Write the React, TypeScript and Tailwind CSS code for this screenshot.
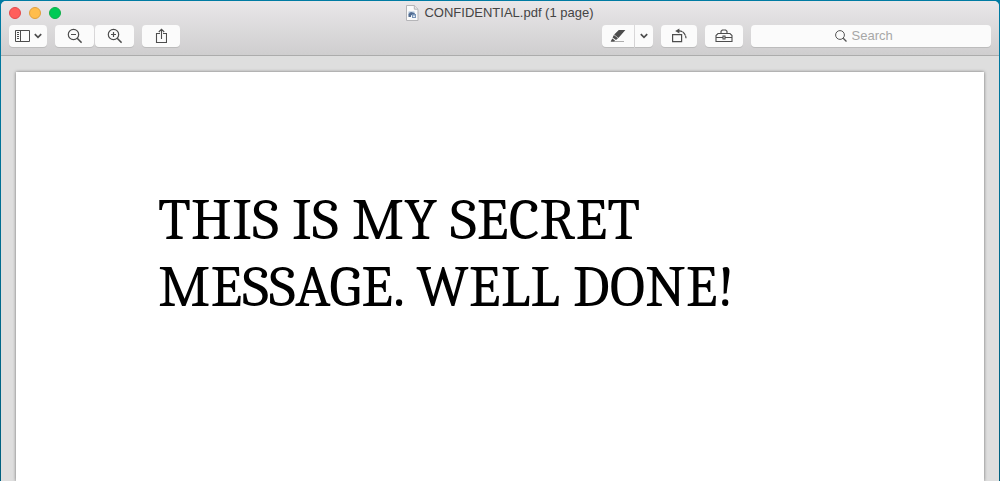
import type { ReactNode } from "react";

function ToolButton({ label, className, children }: { label: string; className: string; children: ReactNode }) {
  return (
    <button
      type="button"
      aria-label={label}
      className={`flex h-[22px] items-center justify-center bg-[#fbfbfb] text-[#4d4d4d] shadow-[0_1px_0_#bcbcbc] ${className}`}
    >
      {children}
    </button>
  );
}

function Chevron() {
  return (
    <svg width="8" height="6" viewBox="0 0 8 6" fill="none" stroke="currentColor" strokeWidth="1.7" aria-hidden="true">
      <path d="M.8 1.2 4 4.4 7.2 1.2" />
    </svg>
  );
}

function Magnifier({ sign }: { sign: "plus" | "minus" }) {
  return (
    <svg width="15" height="16" viewBox="0 0 15 16" fill="none" stroke="currentColor" strokeWidth="1.2" aria-hidden="true">
      <circle cx="6.5" cy="6.5" r="5.2" />
      <path d="m10.2 10.3 4.4 4.4" strokeWidth="1.5" />
      <path d="M4 6.5h5" />
      {sign === "plus" && <path d="M6.5 4v5" />}
    </svg>
  );
}

function TitleBar() {
  return (
    <div className="grid h-6 grid-cols-[1fr_auto_1fr] items-center">
      <div className="flex gap-2 pl-2">
        <button type="button" aria-label="Close" className="size-3 rounded-full border border-[#e2494b] bg-[#ff5f5c]" />
        <button type="button" aria-label="Minimize" className="size-3 rounded-full border border-[#e0a03c] bg-[#ffbd4c]" />
        <button type="button" aria-label="Zoom window" className="size-3 rounded-full border border-[#0fae49] bg-[#00ca56]" />
      </div>
      <h1 className="flex items-center gap-[5px] font-['Helvetica_Neue','Liberation_Sans',sans-serif] text-[13px] text-[#444]">
        <svg width="13" height="16" viewBox="0 0 13 16" aria-hidden="true">
          <path d="M.5.5h7.8L12 4.2v11.3H.5z" fill="#fafafa" stroke="#b5b5b8" />
          <path d="M8.3.5v3.7H12" fill="#e6e6e6" stroke="#b5b5b8" />
          <path d="M2.5 6.5h6v4h-6z" fill="#a8bdd6" />
          <path d="M2.5 9 5 7l4 1.5V10H5v2H2.5z" fill="#536c91" />
          <path d="M6 9h4v4H6z" fill="#7894b8" />
          <path d="M7 10.5h2v1.5H7z" fill="#e0e8f0" />
        </svg>
        <span>CONFIDENTIAL.pdf (1 page)</span>
      </h1>
      <div />
    </div>
  );
}

function Toolbar() {
  return (
    <div className="flex gap-2 px-2 pb-2" role="toolbar" aria-label="Document tools">
      <ToolButton label="View" className="w-[38px] gap-1 rounded">
        <svg width="15" height="12" viewBox="0 0 15 12" fill="none" stroke="currentColor" aria-hidden="true">
          <path d="M.5.5h14v11H.5zM5.5.5v11M2 2.5h2M2 4.5h2M2 6.5h2M2 8.5h2" />
        </svg>
        <Chevron />
      </ToolButton>
      <div className="flex gap-px">
        <ToolButton label="Zoom out" className="w-[39px] rounded">
          <Magnifier sign="minus" />
        </ToolButton>
        <ToolButton label="Zoom in" className="w-[39px] rounded">
          <Magnifier sign="plus" />
        </ToolButton>
      </div>
      <ToolButton label="Share" className="w-[38px] rounded">
        <svg width="12" height="16" viewBox="0 0 12 16" fill="none" stroke="currentColor" strokeWidth="1.1" aria-hidden="true">
          <path d="M5 5.5H1.5v9h10v-9H8M6.5 11V1.5M3.8 4 6.5 1.2 9.2 4" />
        </svg>
      </ToolButton>
      <div className="ml-auto flex gap-px">
        <ToolButton label="Highlight" className="w-8 rounded-l">
          <svg width="16" height="14" viewBox="0 0 16 14" fill="currentColor" aria-hidden="true">
            <path d="M8.8 1H15.4L8.4 9 4.2 5.6zM3.9 6 8 9.3 6 11 2.6 8.6zM2.3 9.4 5 11.5 4.2 12.5H.6z" />
            <path d="M1 12h13v1H1z" opacity=".45" />
          </svg>
        </ToolButton>
        <ToolButton label="Highlight colors" className="w-[18px] rounded-r">
          <Chevron />
        </ToolButton>
      </div>
      <ToolButton label="Rotate left" className="w-9 rounded">
        <svg width="15" height="16" viewBox="0 0 15 16" fill="none" stroke="currentColor" strokeWidth="1.2" aria-hidden="true">
          <path d="M.6 6.6h9v7h-9z" />
          <path d="M6 2.9c4.6-.5 7.6 2.6 8 7.4" strokeDasharray="4.6 .4" />
          <path d="M3.2 2.9 7.4.4v5z" fill="currentColor" stroke="none" />
        </svg>
      </ToolButton>
      <ToolButton label="Markup toolbox" className="w-[38px] rounded">
        <svg width="18" height="14" viewBox="0 0 18 14" fill="none" stroke="currentColor" strokeWidth="1.1" aria-hidden="true">
          <path d="M3 4.5h12l2 2v6H1v-6z" />
          <path d="M6 4.5V2.3L7.3 1h3.4L12 2.3v2.2M1 8.5h7M10.5 8.5H17M8 7h2v3H8z" />
        </svg>
      </ToolButton>
      <label className="flex h-[22px] w-60 items-center justify-center gap-[5px] rounded bg-[#fbfbfb] text-[#555] shadow-[0_1px_0_#bcbcbc]">
        <svg width="12" height="12" viewBox="0 0 12 12" fill="none" stroke="currentColor" aria-hidden="true">
          <circle cx="5" cy="5" r="4.4" />
          <path d="m8.2 8.2 3.3 3.3" strokeWidth="1.3" />
        </svg>
        <input
          type="text"
          aria-label="Search"
          placeholder="Search"
          className="w-14 bg-transparent font-['Helvetica_Neue','Liberation_Sans',sans-serif] text-[13px] outline-none placeholder:text-[#a7a7a7]"
        />
      </label>
    </div>
  );
}

export default function App() {
  return (
    <div className="flex min-h-screen flex-col bg-linear-to-b from-[#007ba3] to-[#00607f] px-px pt-px">
      <div className="flex grow flex-col overflow-hidden rounded-t-[5px] bg-[#dedede]">
        <header className="border-b border-[#acacac] bg-linear-to-b from-[#e9e7e9] to-[#cfcecf]">
          <TitleBar />
          <Toolbar />
        </header>
        <main className="flex grow flex-col px-[15px] pt-4">
          <article className="grow bg-white px-[142px] pt-[115px] shadow-[0_0_3px_rgba(0,0,0,0.5)]">
            <p className="font-['Cambria','Caladea',serif] text-[59px] leading-[67px] text-black">
              THIS IS MY SECRET
              <br />
              MESSAGE. WELL DONE!
            </p>
          </article>
        </main>
      </div>
    </div>
  );
}
